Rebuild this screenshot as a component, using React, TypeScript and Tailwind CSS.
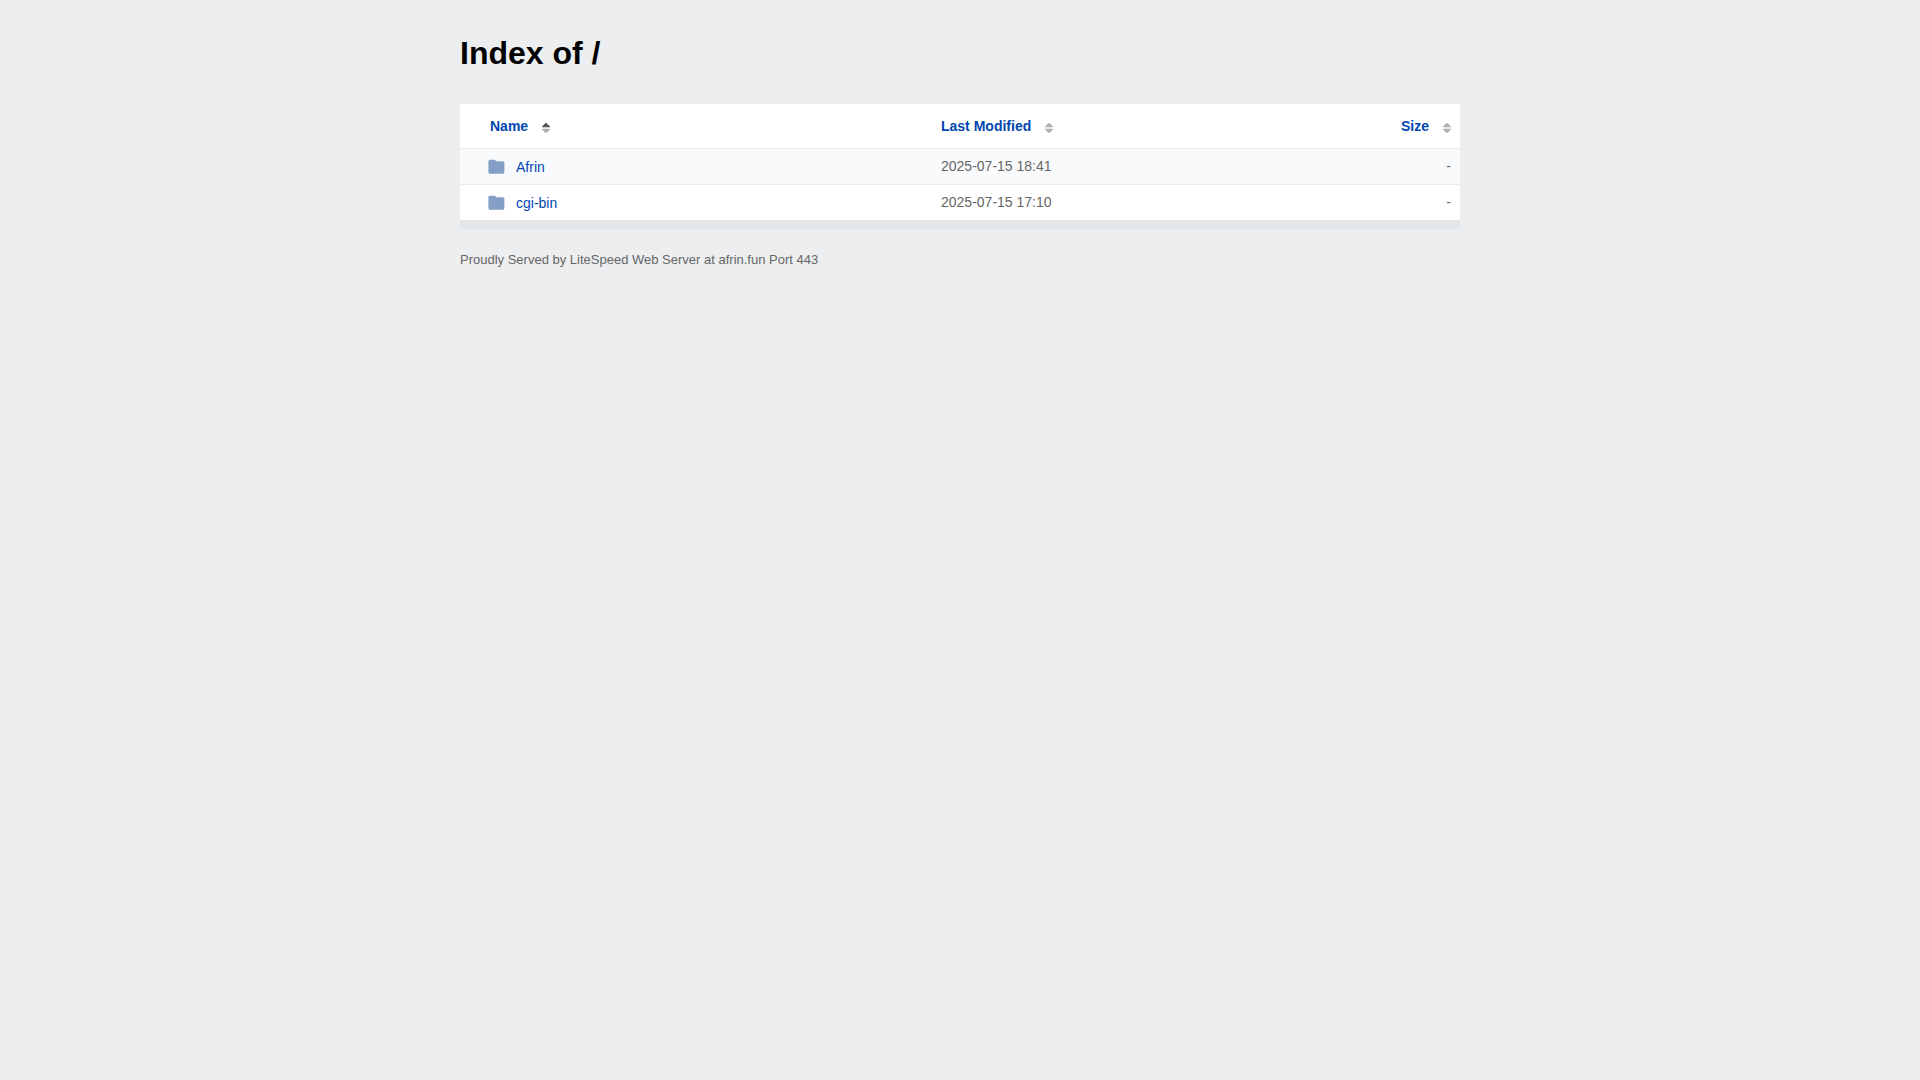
interface Entry {
  name: string;
  modified: string;
  size: string;
}

const entries: Entry[] = [
  { name: "Afrin", modified: "2025-07-15 18:41", size: "-" },
  { name: "cgi-bin", modified: "2025-07-15 17:10", size: "-" },
];

function SortIcon({ active = false }: { active?: boolean }) {
  return (
    <svg className="mt-1 ml-3.5 h-3 w-2" viewBox="0 0 8 12" aria-hidden="true">
      <path d="M0 5.2V4.600L3.600 1h.8L8 4.600v.6z" fill={active ? "#555" : "#b0b0b0"} />
      <path d="M0 6.800h8v.6L4.400 11h-.8L0 7.400z" fill="#b0b0b0" />
    </svg>
  );
}

function FolderIcon() {
  return (
    <svg className="h-4 w-[17px]" viewBox="0 0 17 16" aria-hidden="true">
      <path
        d="M2 .7h4.300c.6 0 1 .3 1.300.8l.5.700h6.500c1 0 1.800.8 1.800 1.800v9c0 1-.8 1.800-1.800 1.800H2.200c-1 0-1.800-.8-1.800-1.800V2.300C.4 1.400 1.100.7 2 .7z"
        fill="#849fc6"
      />
    </svg>
  );
}

interface SortButtonProps {
  label: string;
  active?: boolean;
}

function SortButton({ label, active }: SortButtonProps) {
  return (
    <button type="button" className="inline-flex items-center align-top font-bold text-[#0046b0]">
      {label}
      <SortIcon active={active} />
    </button>
  );
}

export default function App() {
  return (
    <div className="min-h-screen bg-[#edeef0] font-['Liberation_Sans',Arial,sans-serif] text-sm leading-5 text-[#666]">
      <main className="mx-auto max-w-[1000px] pt-8">
        <h1 className="text-[32px] leading-[42px] font-bold text-black">Index of /</h1>
        <div className="mt-[30px] border-b-9 border-[#e3e7ea]">
          <table className="w-full table-fixed border-separate border-spacing-0 bg-white">
            <thead>
              <tr className="h-11">
                <th className="w-[473px] py-3 pl-[30px] text-left" aria-sort="ascending">
                  <SortButton label="Name" active />
                </th>
                <th className="px-2 py-3 text-left">
                  <SortButton label="Last Modified" />
                </th>
                <th className="w-[200px] px-[9px] py-3 text-right">
                  <SortButton label="Size" />
                </th>
              </tr>
            </thead>
            <tbody>
              {entries.map((entry) => (
                <tr key={entry.name} className="h-9 odd:bg-[#f9fafc]">
                  <td className="border-t border-[#e9ebec] pl-7">
                    <a href={`/${entry.name}/`} className="flex items-center gap-[11px] text-[#0046b0]">
                      <FolderIcon />
                      {entry.name}
                    </a>
                  </td>
                  <td className="border-t border-[#e9ebec] px-2 pb-0.5">{entry.modified}</td>
                  <td className="border-t border-[#e9ebec] px-[9px] pb-0.5 text-right">{entry.size}</td>
                </tr>
              ))}
            </tbody>
          </table>
        </div>
        <footer className="mt-[21px] text-[13px]">
          Proudly Served by LiteSpeed Web Server at afrin.fun Port 443
        </footer>
      </main>
    </div>
  );
}
